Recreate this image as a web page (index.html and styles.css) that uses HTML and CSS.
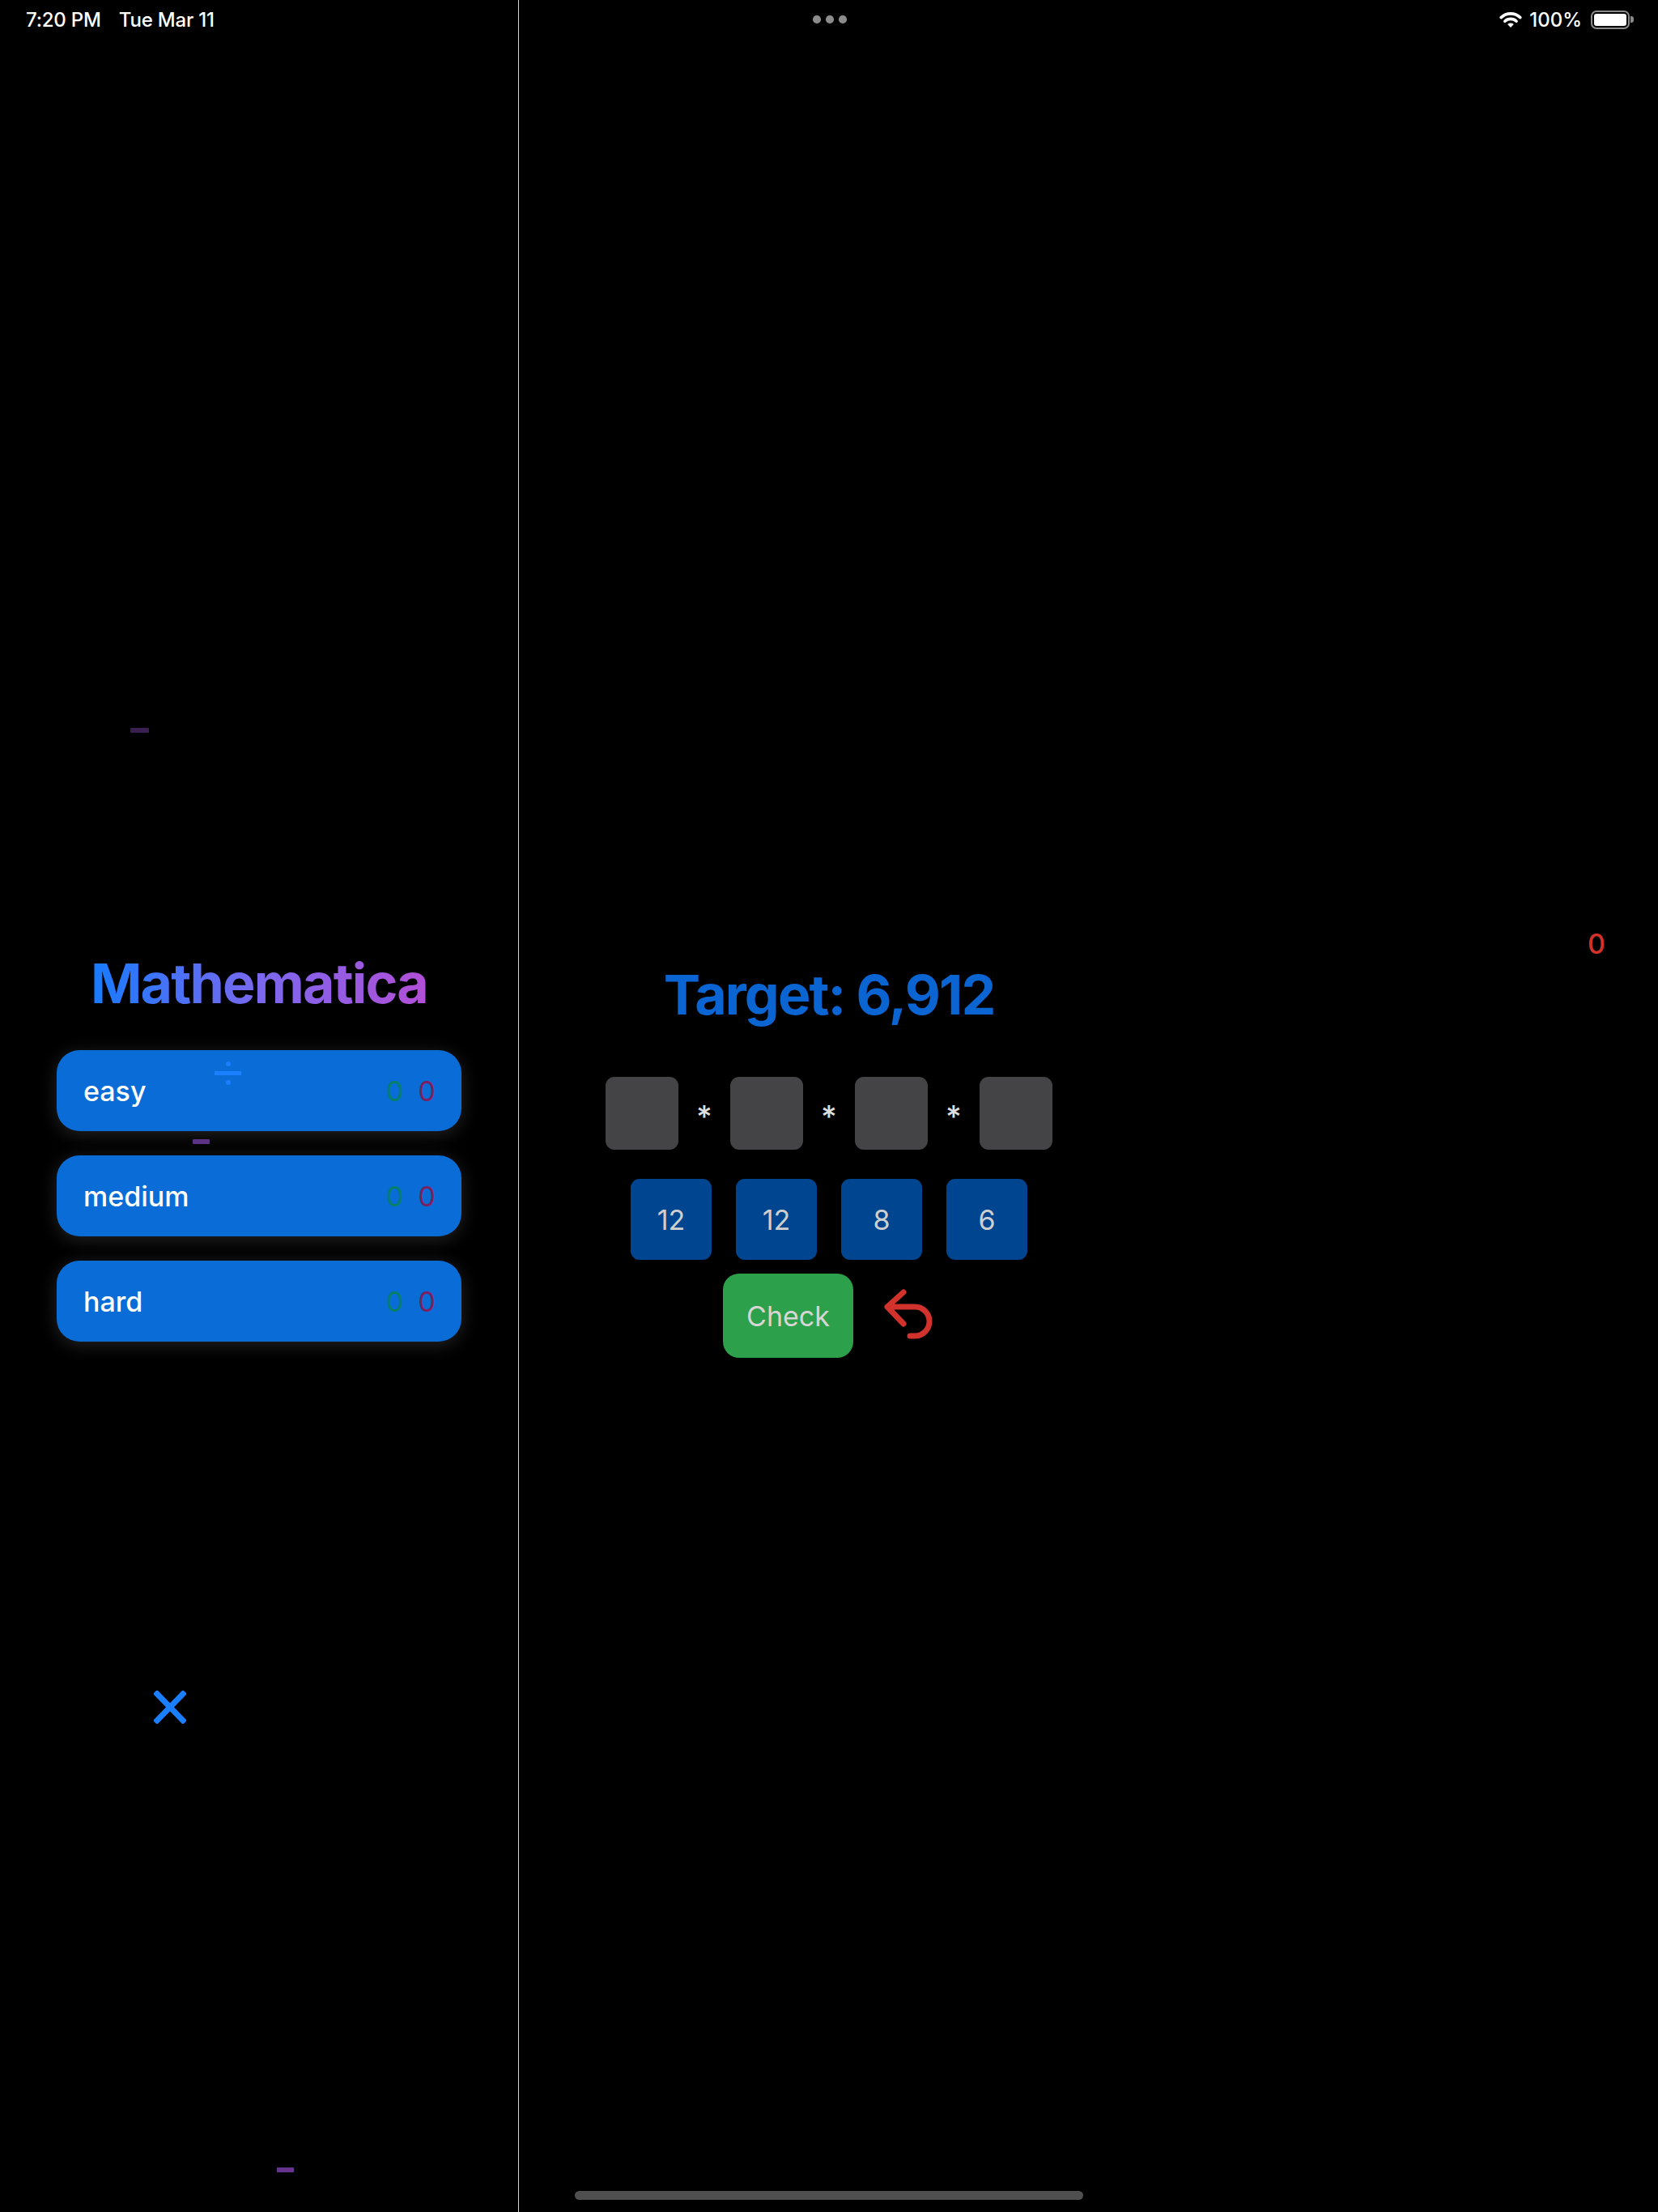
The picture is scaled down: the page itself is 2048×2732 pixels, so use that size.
FILE: index.html
```html
<!DOCTYPE html>
<html lang="en">
<head>
<meta charset="utf-8">
<title>Mathematica</title>
<link rel="stylesheet" href="styles.css">
</head>
<body>
<div class="screen">
  <aside class="sidebar">
    <h1 class="title">Mathematica</h1>
    <div class="levels">
      <button class="level"><span class="level-name">easy</span><span class="score good">0</span><span class="score bad">0</span></button>
      <button class="level"><span class="level-name">medium</span><span class="score good">0</span><span class="score bad">0</span></button>
      <button class="level"><span class="level-name">hard</span><span class="score good">0</span><span class="score bad">0</span></button>
    </div>
    <div class="sym sym-minus m1"></div>
    <div class="sym sym-div"><i class="dot"></i><i class="bar"></i><i class="dot"></i></div>
    <div class="sym sym-minus m2"></div>
    <svg class="sym sym-times" width="40" height="41" viewBox="0 0 40 41"><path d="M4 4 L36 37 M36 4 L4 37" stroke="#1a7fff" stroke-width="7" stroke-linecap="square" fill="none"/></svg>
    <div class="sym sym-minus m3"></div>
  </aside>
  <main class="game">
    <div class="score-row"><span class="miss">0</span></div>
    <div class="stage">
      <div class="target">Target: 6,912</div>
      <div class="slots">
        <div class="slot"></div><span class="op">*</span>
        <div class="slot"></div><span class="op">*</span>
        <div class="slot"></div><span class="op">*</span>
        <div class="slot"></div>
      </div>
      <div class="tiles">
        <button class="tile">12</button>
        <button class="tile">12</button>
        <button class="tile">8</button>
        <button class="tile">6</button>
      </div>
      <div class="actions">
        <button class="check">Check</button>
        <svg class="undo" width="66" height="66" viewBox="0 0 66 66"><path d="M27 4 L7 22 L27 43 M7 22 H41 A18 18 0 0 1 41 58 H35" stroke="#d1322b" stroke-width="7" stroke-linecap="round" stroke-linejoin="round" fill="none"/></svg>
      </div>
    </div>
  </main>
  <header class="status">
    <div class="status-left"><span>7:20 PM</span><span>Tue Mar 11</span></div>
    <div class="status-dots"><i></i><i></i><i></i></div>
    <div class="status-right">
      <svg class="wifi" width="28" height="21" viewBox="0 0 28 21"><path d="M2.2 7.6 A17 17 0 0 1 25.8 7.6" stroke="#fff" stroke-width="3.6" stroke-linecap="round" fill="none"/><path d="M6.9 12.2 A10.4 10.4 0 0 1 21.1 12.2" stroke="#fff" stroke-width="3.6" stroke-linecap="round" fill="none"/><path d="M14 20 L10.2 16 A5.6 5.6 0 0 1 17.8 16 Z" fill="#fff"/></svg>
      <span class="pct">100%</span>
      <div class="battery"><div class="battery-body"><div class="battery-fill"></div></div><div class="battery-nub"></div></div>
    </div>
  </header>
  <div class="home-indicator"></div>
</div>
</body>
</html>
```
FILE: styles.css
```css
* { box-sizing: border-box; }
html, body { margin: 0; padding: 0; background: #000; }
body { font-family: Inter, "Noto Sans", "Liberation Sans", sans-serif; color: #fff; }
button { font-family: inherit; border: none; margin: 0; padding: 0; }

.screen {
  position: relative;
  width: 2048px;
  height: 2732px;
  display: grid;
  grid-template-columns: 641px 1fr;
  overflow: hidden;
}

/* status bar overlay */
.status {
  position: absolute;
  top: 0; left: 0; right: 0;
  height: 48px;
  display: grid;
  grid-template-columns: 1fr auto 1fr;
  align-items: center;
  padding: 0 30px 0 32px;
  font-size: 24px;
  font-weight: 500;
}
.status-left { display: flex; gap: 22px; letter-spacing: -0.2px; }
.status-dots { display: flex; gap: 6.5px; }
.status-dots i { width: 9.5px; height: 9.5px; border-radius: 50%; background: #8c8c8c; display: block; }
.status-right { display: flex; justify-content: flex-end; align-items: center; }
.wifi { display: block; margin-right: 9px; }
.pct { margin-right: 11px; }
.battery { display: flex; align-items: center; }
.battery-body {
  width: 48px; height: 23px;
  border: 2px solid #8a8a8a;
  border-radius: 7px;
  padding: 2px;
}
.battery-fill { width: 100%; height: 100%; background: #fff; border-radius: 3px; }
.battery-nub { width: 4px; height: 8px; background: #8a8a8a; border-radius: 0 3px 3px 0; margin-left: 1px; }

/* sidebar */
.sidebar {
  position: relative;
  border-right: 1px solid #d6d6d6;
  padding-top: 1174px;
  display: flex;
  flex-direction: column;
  align-items: center;
}
.title {
  margin: 0;
  font-size: 68px;
  line-height: 80px;
  font-weight: 700;
  letter-spacing: -1.8px;
  background: linear-gradient(90deg, #177bff 0%, #7a68ee 50%, #b24fd6 100%);
  -webkit-background-clip: text;
  background-clip: text;
  color: transparent;
}
.levels {
  margin-top: 43px;
  display: flex;
  flex-direction: column;
  gap: 30px;
}
.level {
  width: 500px;
  height: 100px;
  border-radius: 28px;
  background: #0a6cd6;
  display: flex;
  align-items: center;
  padding: 0 32px 0 33px;
  font-size: 34px;
  color: #fff;
  box-shadow: 0 4px 22px rgba(130, 130, 130, 0.28);
}
.level-name { flex: 1; text-align: left; font-weight: 500; }
.score { font-weight: 400; }
.score.good { color: #06806b; }
.score.bad { color: #7d1f5f; margin-left: 18px; }

/* floating decorative operators */
.sym { position: absolute; z-index: 2; }
.sym-minus { height: 6px; border-radius: 1px; }
.m1 { left: 161px; top: 899px; width: 23px; background: #3a2052; }
.m2 { left: 238px; top: 1407px; width: 21px; background: #5c3282; }
.m3 { left: 342px; top: 2677px; width: 21px; background: #66348e; }
.sym-div { left: 265px; top: 1311px; width: 33px; display: flex; flex-direction: column; align-items: center; gap: 6px; }
.sym-div .dot { display: block; width: 6px; height: 6px; border-radius: 50%; background: #1a80ff; }
.sym-div .bar { display: block; width: 33px; height: 5px; background: #1a80ff; }
.sym-times { left: 190px; top: 2088px; }

/* game area */
.game {
  display: flex;
  flex-direction: column;
  padding-top: 1146px;
}
.score-row {
  display: flex;
  justify-content: flex-end;
  padding-right: 65px;
  height: 40px;
}
.miss { font-size: 34px; line-height: 40px; color: #d3322b; font-weight: 500; }
.stage {
  width: 766px;
  display: flex;
  flex-direction: column;
  align-items: center;
}
.target {
  margin-top: 2px;
  font-size: 68px;
  line-height: 80px;
  font-weight: 700;
  color: #0a64d2;
  letter-spacing: -1.9px;
}
.slots {
  margin-top: 62px;
  display: flex;
  align-items: center;
}
.slot { width: 90px; height: 90px; border-radius: 11px; background: #444446; }
.op {
  width: 64px;
  text-align: center;
  font-size: 38px;
  line-height: 40px;
  color: #dedede;
  font-weight: 500;
  position: relative;
  top: 4px;
}
.tiles {
  margin-top: 36px;
  display: flex;
  gap: 30px;
}
.tile {
  width: 100px; height: 100px;
  border-radius: 11px;
  background: #00458f;
  color: #cfcfcf;
  font-size: 34px;
  font-weight: 400;
}
.actions {
  margin-top: 17px;
  display: flex;
  align-items: center;
  gap: 35px;
}
.check {
  width: 161px; height: 104px;
  border-radius: 20px;
  background: #2ca04a;
  color: #d6d6d6;
  font-size: 34px;
  font-weight: 400;
}
.undo { display: block; }

.home-indicator {
  position: absolute;
  left: 710px;
  top: 2706px;
  width: 628px;
  height: 11px;
  border-radius: 6px;
  background: #4f4f4f;
}
```
